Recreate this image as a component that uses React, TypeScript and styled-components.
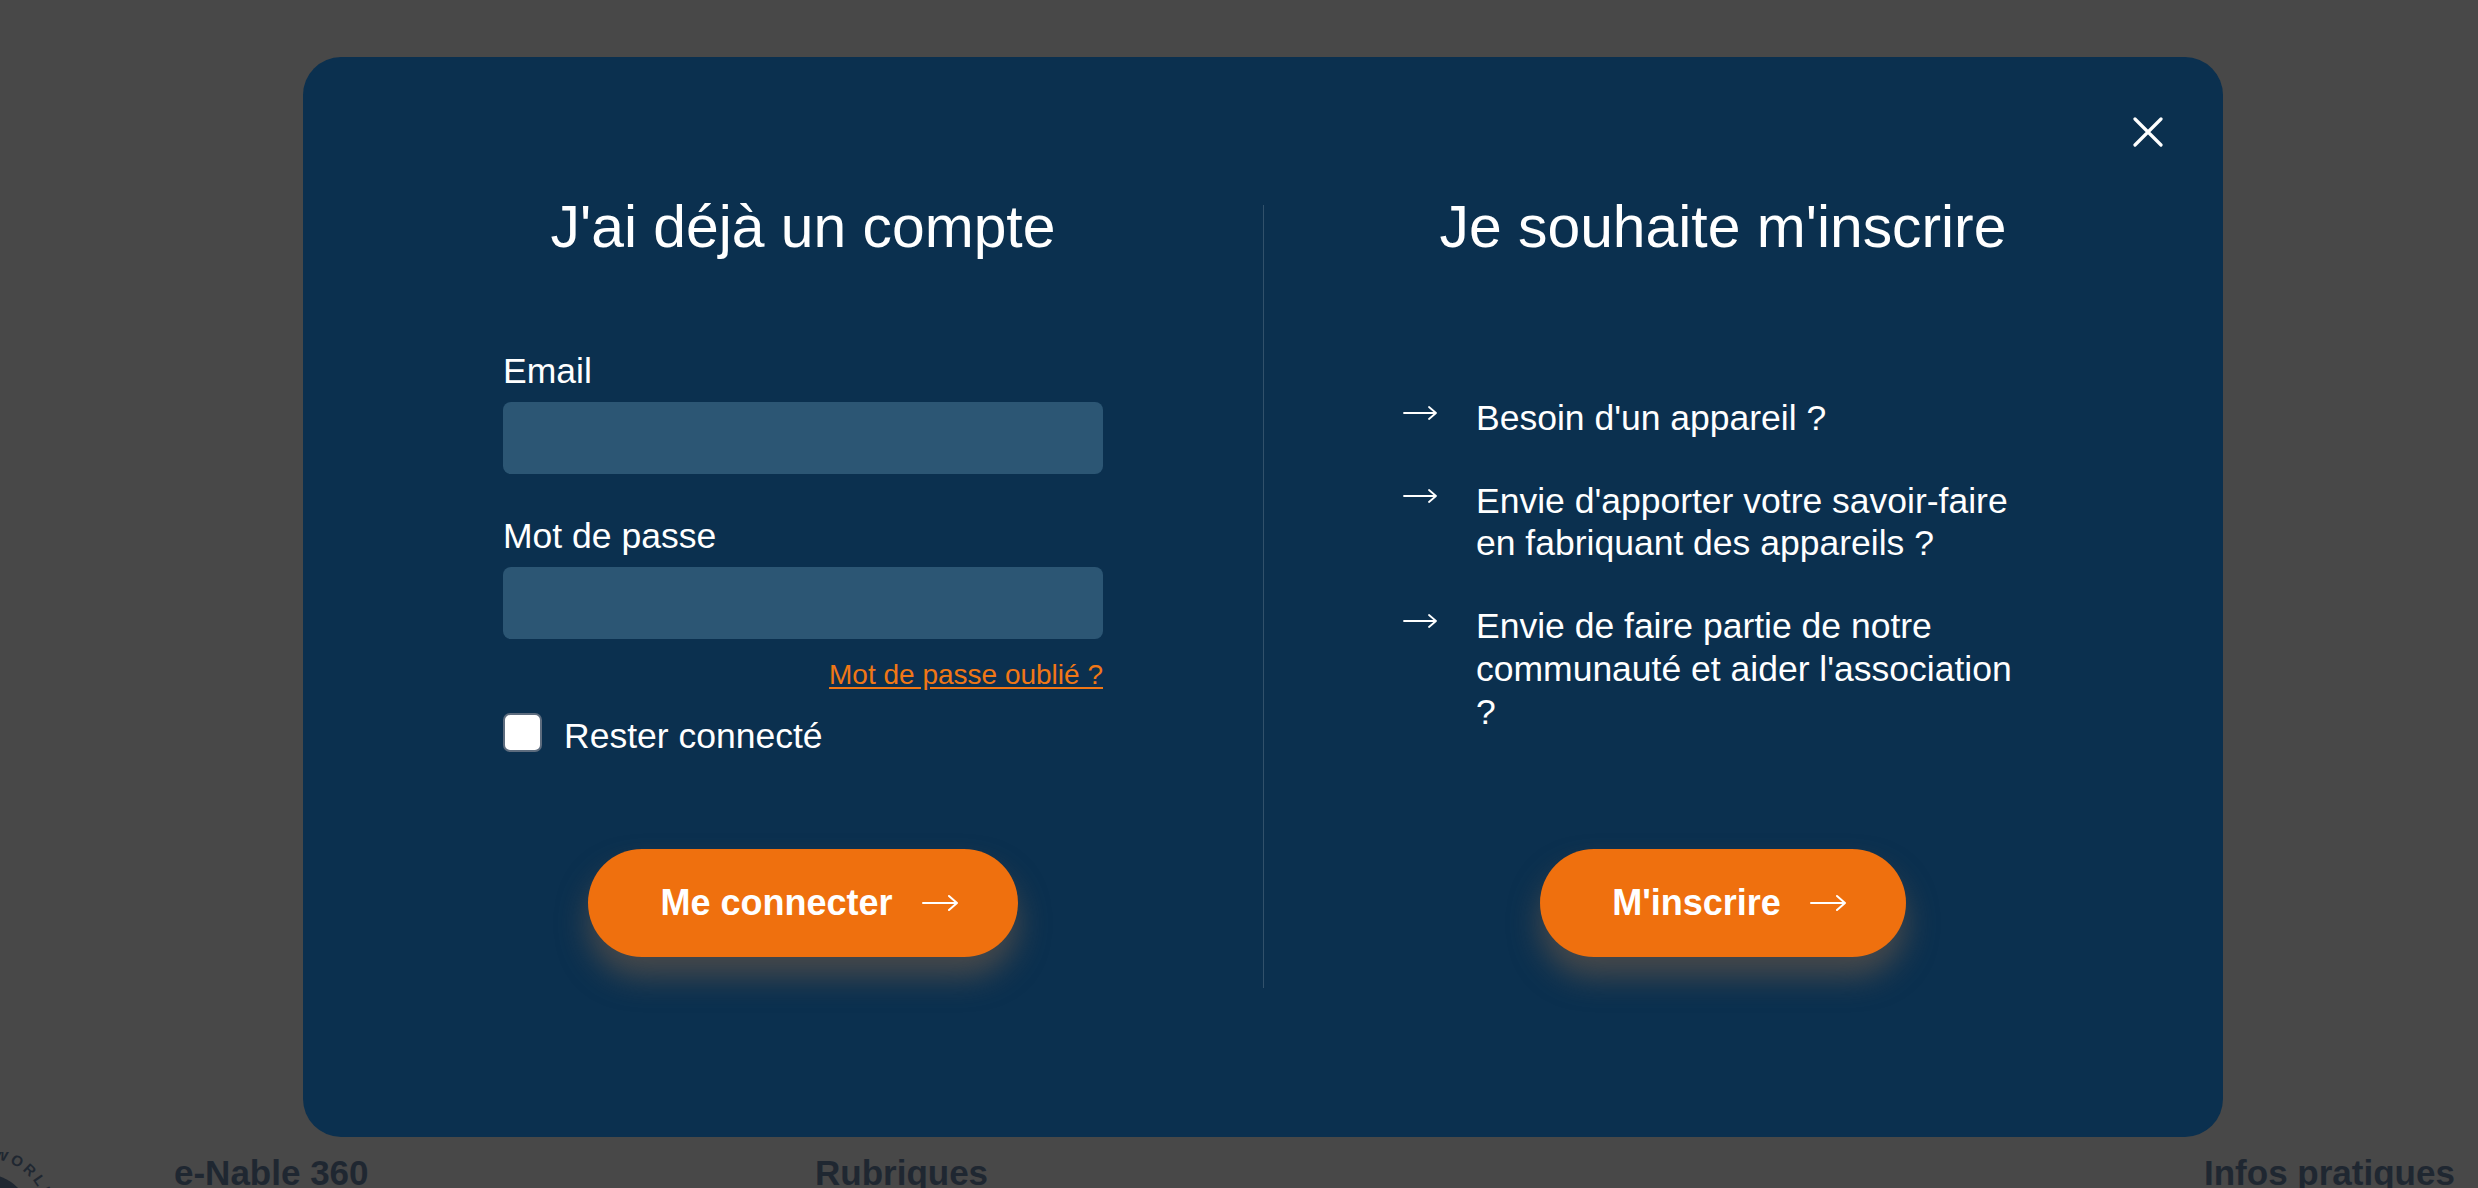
import React from "react";
import styled, { createGlobalStyle } from "styled-components";

const Global = createGlobalStyle`
  html, body { margin: 0; padding: 0; background: #484848; }
  body { font-family: "Liberation Sans", Arial, Helvetica, sans-serif; overflow: hidden; }
  * { box-sizing: border-box; }
`;

const Page = styled.div`
  width: 2478px;
  height: 1188px;
  overflow: hidden;
  padding-top: 57px;
  display: flex;
  flex-direction: column;
`;

const Modal = styled.section`
  position: relative;
  flex: none;
  margin-left: 303px;
  width: 1920px;
  height: 1080px;
  background: #0b304f;
  border-radius: 38px;
  padding: 135px 80px 149px;
  color: #ffffff;
  display: grid;
  grid-template-columns: 1fr 1px 1fr;
  column-gap: 39.5px;
`;

const CloseButton = styled.button`
  position: absolute;
  top: 60px;
  right: 60px;
  width: 30px;
  height: 30px;
  padding: 0;
  border: none;
  background: transparent;
  cursor: pointer;
  display: flex;
`;

const Column = styled.div`
  display: flex;
  flex-direction: column;
  align-items: center;
  padding-bottom: 31px;
  min-width: 0;
`;

const Divider = styled.div`
  margin-top: 13px;
  background: rgba(255, 255, 255, 0.16);
`;

const Title = styled.h2`
  margin: 0;
  font-size: 58.8px;
  line-height: 70px;
  font-weight: 400;
  text-align: center;
  white-space: nowrap;
`;

const Form = styled.form`
  width: 600px;
  margin-top: 88px;
  display: flex;
  flex-direction: column;
`;

const Label = styled.label<{ $spaced?: boolean }>`
  font-size: 35.5px;
  line-height: 42px;
  margin-top: ${(p) => (p.$spaced ? "41px" : "0")};
  margin-bottom: 10px;
`;

const Input = styled.input`
  width: 100%;
  height: 72px;
  border: none;
  border-radius: 8px;
  background: #2c5674;
  color: #fff;
  font-size: 30px;
  padding: 0 20px;
  outline: none;
`;

const ForgotLink = styled.a`
  align-self: flex-end;
  margin-top: 19px;
  font-size: 28px;
  line-height: 34px;
  color: #f07716;
  text-decoration: underline;
  text-underline-offset: 3px;
`;

const CheckRow = styled.label`
  margin-top: 21px;
  display: flex;
  align-items: flex-start;
  gap: 22px;
`;

const CheckBox = styled.span`
  width: 39px;
  height: 39px;
  flex: none;
  background: #ffffff;
  border: 2px solid #5d6c7e;
  border-radius: 7px;
`;

const CheckText = styled.span`
  margin-top: 2px;
  font-size: 35.5px;
  line-height: 42px;
`;

const CtaButton = styled.button`
  margin-top: auto;
  height: 108px;
  padding: 0 60px 0 72px;
  display: inline-flex;
  align-items: center;
  gap: 29px;
  border: none;
  border-radius: 54px;
  background: #ef700e;
  color: #ffffff;
  font-family: "Liberation Sans", Arial, Helvetica, sans-serif;
  font-size: 36px;
  font-weight: 700;
  box-shadow: 0 20px 30px rgba(74, 74, 74, 0.95);
  cursor: pointer;
`;

const List = styled.ul`
  margin: 135px 0 0;
  padding: 0;
  list-style: none;
  width: 640px;
  display: flex;
  flex-direction: column;
  gap: 40px;
`;

const Item = styled.li`
  display: flex;
  align-items: flex-start;
  gap: 39px;
  font-size: 35.5px;
  line-height: 42.7px;
`;

const ItemText = styled.span`
  flex: 0 1 548px;
  max-width: 548px;
`;

const ListArrow = styled.svg`
  flex: none;
  margin-top: 8px;
`;

const Footer = styled.footer`
  margin-top: 15px;
  display: grid;
  grid-template-columns: 174px 641px 1389px auto;
  align-items: start;
  font-size: 35px;
  line-height: 42px;
  font-weight: 700;
  color: #1f2731;
  white-space: nowrap;
`;

const LogoCell = styled.div`
  height: 42px;
  overflow: hidden;
`;

const Arrow = ({ w, h }: { w: number; h: number }) => (
  <svg width={w} height={h} viewBox={`0 0 ${w} ${h}`} fill="none">
    <path
      d={`M1 ${h / 2} H${w - 1} M${w - 9} ${h / 2 - 7} L${w - 1} ${h / 2} L${w - 9} ${h / 2 + 7}`}
      stroke="#ffffff"
      strokeWidth={2}
      strokeLinecap="round"
      strokeLinejoin="round"
    />
  </svg>
);

const items = [
  "Besoin d'un appareil ?",
  "Envie d'apporter votre savoir-faire en fabriquant des appareils ?",
  "Envie de faire partie de notre communauté et aider l'association ?",
];

export default function App() {
  return (
    <>
      <Global />
      <Page>
        <Modal>
          <CloseButton aria-label="Fermer">
            <svg width="30" height="30" viewBox="0 0 30 30">
              <path
                d="M2 2 L28 28 M28 2 L2 28"
                stroke="#ffffff"
                strokeWidth={3.2}
                strokeLinecap="round"
              />
            </svg>
          </CloseButton>

          <Column>
            <Title>J'ai déjà un compte</Title>
            <Form onSubmit={(e) => e.preventDefault()}>
              <Label htmlFor="email">Email</Label>
              <Input id="email" type="email" />
              <Label htmlFor="pwd" $spaced>
                Mot de passe
              </Label>
              <Input id="pwd" type="password" />
              <ForgotLink href="#">Mot de passe oublié ?</ForgotLink>
              <CheckRow>
                <CheckBox />
                <CheckText>Rester connecté</CheckText>
              </CheckRow>
            </Form>
            <CtaButton>
              Me connecter
              <Arrow w={36} h={20} />
            </CtaButton>
          </Column>

          <Divider />

          <Column>
            <Title>Je souhaite m'inscrire</Title>
            <List>
              {items.map((t) => (
                <Item key={t}>
                  <ListArrow width="34" height="16" viewBox="0 0 34 16" fill="none">
                    <path
                      d="M1 8 H33 M26 2 L33 8 L26 14"
                      stroke="#ffffff"
                      strokeWidth={1.8}
                      strokeLinecap="round"
                      strokeLinejoin="round"
                    />
                  </ListArrow>
                  <ItemText>{t}</ItemText>
                </Item>
              ))}
            </List>
            <CtaButton>
              M'inscrire
              <Arrow w={36} h={20} />
            </CtaButton>
          </Column>
        </Modal>

        <Footer>
          <LogoCell>
            <svg width="80" height="42" viewBox="0 0 80 42">
              <defs>
                <path id="logoArc" d="M -77 68 A 62 62 0 0 1 47 68" />
              </defs>
              <circle cx="-15" cy="68" r="46" fill="#1f2731" />
              <text fontSize="15" fontWeight="700" fill="#1f2731" letterSpacing="3" fontFamily="Liberation Sans, Arial, sans-serif">
                <textPath href="#logoArc" startOffset="54%">
                  WORLD
                </textPath>
              </text>
            </svg>
          </LogoCell>
          <span>e-Nable 360</span>
          <span>Rubriques</span>
          <span>Infos pratiques</span>
        </Footer>
      </Page>
    </>
  );
}
